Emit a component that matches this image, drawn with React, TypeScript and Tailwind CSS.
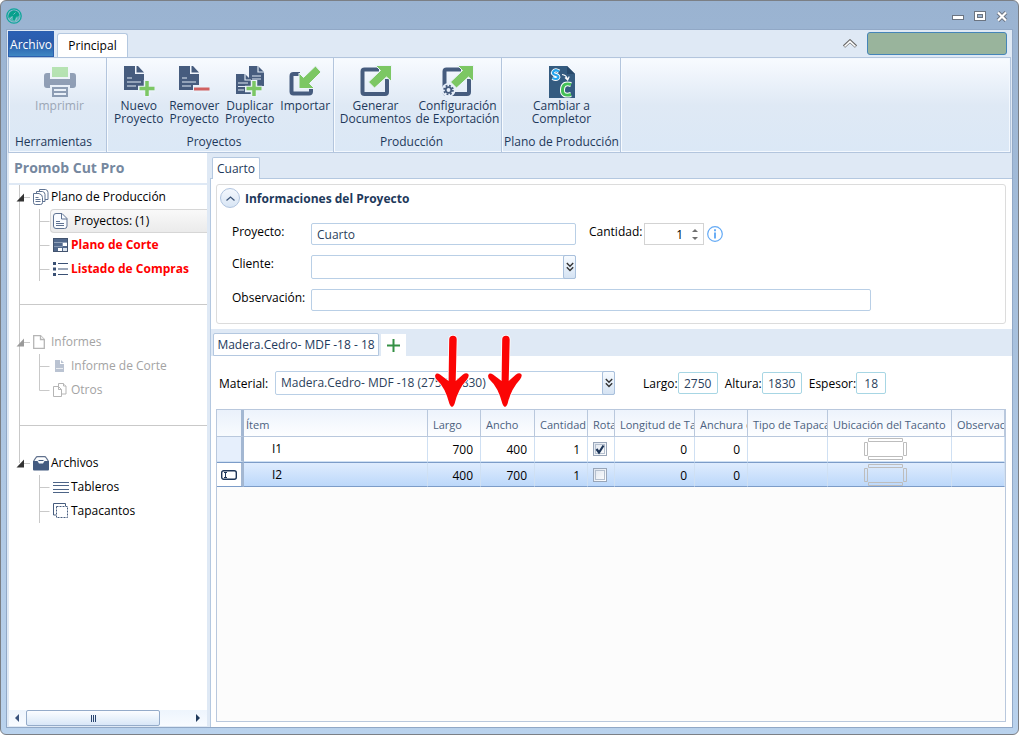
import React from 'react';

const NAVY = '#465c7e';
const GREEN = '#7cc764';

/* ---------- icons ---------- */

function LogoIcon() {
  return (
    <svg width="16" height="16" viewBox="0 0 16 16" aria-hidden="true">
      <circle cx="8" cy="8" r="7.2" fill="none" stroke="#0fa79b" strokeWidth="1.3" />
      <circle cx="8" cy="8" r="5.8" fill="#4fb5b2" />
      <path d="M2.500 10C2 7 3.500 4 6 3C9 1.800 12.500 3.600 13.300 6.500C13.200 8 12 8.800 10.500 8.600C9.500 9.500 9.600 11 8.400 12.500L7 11.500C7.500 9.500 6.800 8 5.500 8.300Z" fill="#07a08c" />
      <path d="M3.500 11.500L6.500 8.500M9.500 13L10.800 9.800M7.500 6.500L9.500 4.500" stroke="#9cc7d4" strokeWidth="0.8" />
    </svg>
  );
}

function PrinterIcon() {
  return (
    <svg width="32" height="32" viewBox="0 0 32 32" className="opacity-55" aria-hidden="true">
      <rect x="8" y="2" width="16" height="10" fill="#86d478" />
      <path d="M3 8h3v6h20V8h3q3 0 3 3v9q0 3-3 3h-3v-3H6v3H3q-3 0-3-3v-9q0-3 3-3Z" fill={NAVY} />
      <path d="M8 22h16v10H8Z" fill={NAVY} />
      <path d="M10 24h12v2H10ZM10 28h12v2H10Z" fill="#eef4fb" />
    </svg>
  );
}

function SheetShape() {
  return (
    <>
      <path d="M2 1h11v8h9v16H2Z" fill={NAVY} />
      <path d="M14.500 1h1.500l6 6.500h-7.500Z" fill={NAVY} />
      <path d="M5 13h5M5 17h14M5 21h9" stroke="#dfe9f4" strokeWidth="1.200" />
    </>
  );
}

function PlusShape() {
  return (
    <>
      <path d="M25 15v17M16 24h17" stroke="#e9f1fa" strokeWidth="6.500" />
      <path d="M25 16v15M17.500 23.500h15" stroke={GREEN} strokeWidth="3.500" />
    </>
  );
}

function NewIcon() {
  return (
    <svg width="34" height="32" viewBox="0 0 34 32" aria-hidden="true">
      <SheetShape />
      <PlusShape />
    </svg>
  );
}

function RemoveIcon() {
  return (
    <svg width="34" height="32" viewBox="0 0 34 32" aria-hidden="true">
      <SheetShape />
      <path d="M16 20h17v8H16Z" fill="#e9f1fa" />
      <path d="M17 22.500h15.500v3H17Z" fill="#d06060" />
    </svg>
  );
}

function DuplicateIcon() {
  return (
    <svg width="34" height="32" viewBox="0 0 34 32" aria-hidden="true">
      <path d="M16 1h9l6 6v14H16Z" fill={NAVY} />
      <path d="M25 1v6h6M19 11h9M19 14h9" stroke="#dfe9f4" strokeWidth="1.200" fill="none" />
      <path d="M3 9h9l6 6v14H3Z" fill={NAVY} />
      <path d="M12 9v6h6M5 18h10M5 21.500h10M5 25h6" stroke="#dfe9f4" strokeWidth="1.200" fill="none" />
      <g transform="translate(-4 0)">
        <PlusShape />
      </g>
    </svg>
  );
}

function ImportIcon() {
  return (
    <svg width="34" height="32" viewBox="0 0 34 32" aria-hidden="true">
      <path d="M12 9H5.500q-2 0-2 2v15.500q0 2 2 2H21q2 0 2-2V23" fill="none" stroke={NAVY} strokeWidth="4" />
      <path d="M11 8v15.500h15.500L21.500 18.500 33 7 27.500 1 15.500 12.500Z" fill={GREEN} stroke="#edf4fb" strokeWidth="1" />
    </svg>
  );
}

function ExportIcon({ gear = false }: { gear?: boolean }) {
  return (
    <svg width="34" height="32" viewBox="0 0 34 32" aria-hidden="true">
      <path d="M20 4.500H5.500q-2 0-2 2v20.500q0 2 2 2H26q2 0 2-2V14" fill="none" stroke={NAVY} strokeWidth="4" />
      <path d="M16.500 .5H32.500V16.500L27.500 12 15.500 23 9.500 17 21.500 5.500Z" fill={GREEN} stroke="#edf4fb" strokeWidth="1" />
      {gear && (
        <>
          <circle cx="7.500" cy="25" r="7" fill="#e7effa" />
          <circle cx="7.500" cy="25" r="4.400" fill="none" stroke={NAVY} strokeWidth="1.800" strokeDasharray="1.800 1.656" />
          <circle cx="7.500" cy="25" r="2.800" fill="none" stroke={NAVY} strokeWidth="1.800" />
        </>
      )}
    </svg>
  );
}

function SwitchIcon() {
  return (
    <svg width="28" height="34" viewBox="0 0 28 34" aria-hidden="true">
      <path d="M1 1h18l8 8v24H1Z" fill="#345b80" />
      <path d="M19 1v8h8Z" fill="#27496b" />
      <path d="M11 6.500Q7.500 4 5.500 6.500T8 10Q11.500 11 10 13T4.500 13" fill="none" stroke="#fff" strokeWidth="4" />
      <path d="M11 6.500Q7.500 4 5.500 6.500T8 10Q11.500 11 10 13T4.500 13" fill="none" stroke="#25a5ee" strokeWidth="2.200" />
      <path d="M14 9.500q4.500 .3 5.500 5M17 12.500l2.700 2.500 1.500-3.500" fill="none" stroke="#fff" strokeWidth="1.200" />
      <path d="M23 19.500Q15 17 14.500 24.500T23 29.500" fill="none" stroke="#fff" strokeWidth="5" />
      <path d="M23 19.500Q15 17 14.500 24.500T23 29.500" fill="none" stroke="#44bf57" strokeWidth="3" />
    </svg>
  );
}

function StackIcon() {
  return (
    <svg width="16" height="16" viewBox="0 0 16 16" fill="#fff" stroke="#5f7392" aria-hidden="true">
      <path d="M6.500 .5h6q2.500 .5 2.500 3v7h-8.500Z" />
      <path d="M3.500 2.500h6q2.500 .5 2.500 3v7h-8.500Z" />
      <path d="M.5 4.500h5.500q3.500 1 3.500 4v5q0 2-2 2h-5q-2 0-2-2Z" />
      <path d="M2.500 8.500h3M2.500 10.500h5M2.500 12.500h5" fill="none" />
    </svg>
  );
}

function PageIcon() {
  return (
    <svg width="15" height="16" viewBox="0 0 15 16" fill="none" stroke="#5f7392" aria-hidden="true">
      <path d="M3 .5h6l5 5V13q0 2.500-2.500 2.500h-8.500Q.5 15.500.5 13V3Q.5.5 3 .5Z" fill="#fafcff" />
      <path d="M8.500 .5v5.500h5.500M3 8.500h4M3 10.500h8M3 12.500h8" />
    </svg>
  );
}

function PlanIcon() {
  return (
    <svg width="15" height="15" viewBox="0 0 15 15" aria-hidden="true">
      <rect x=".5" y=".5" width="14" height="13" fill="#52698c" stroke="#42536e" />
      <path d="M1 4.500h13" stroke="#93a3ba" />
      <path d="M1 8.500h8.500v-4" fill="none" stroke="#8496b0" />
      <rect x="10" y="5" width="4" height="3" fill="#fff" />
      <rect x="5" y="10" width="4" height="3" fill="#fff" />
      <rect x="10" y="10" width="4" height="3" fill="#dce5ef" />
    </svg>
  );
}

function ListIcon() {
  return (
    <svg width="15" height="14" viewBox="0 0 15 14" aria-hidden="true">
      <path d="M0 0h3v3H0ZM0 5.500h3v3H0ZM0 11h3v3H0Z" fill="#3a5074" />
      <path d="M5 1.500h10M5 7h10M5 12.500h10" stroke="#3a5074" strokeWidth="1.200" />
    </svg>
  );
}

function BlankPageIcon() {
  return (
    <svg width="12" height="14" viewBox="0 0 12 14" fill="#fff" stroke="#b5b5b5" strokeWidth="1.300" aria-hidden="true">
      <path d="M.7 .7h6.800l3.800 3.800v8.800H.7Z" />
      <path d="M7.500 .7v3.800h3.800" />
    </svg>
  );
}

function ReportIcon() {
  return (
    <svg width="12" height="12" viewBox="0 0 12 12" aria-hidden="true">
      <path d="M2 0h5v4h4v8H2Z" fill="#bac3d2" />
      <path d="M8 0l3 3H8Z" fill="#bac3d2" />
      <path d="M3 8.500h7" stroke="#fff" strokeWidth=".7" />
    </svg>
  );
}

function CopiesIcon() {
  return (
    <svg width="14" height="14" viewBox="0 0 14 14" fill="#fff" stroke="#b5b5b5" aria-hidden="true">
      <path d="M5.500 .5h5l2.500 2.500v8h-7.500Z" />
      <path d="M.5 3.500h5l3 3v7h-8ZM5.500 3.500v3h3M10.500 .5v2.500h2.500" />
    </svg>
  );
}

function ArchiveIcon() {
  return (
    <svg width="16" height="15" viewBox="0 0 16 15" aria-hidden="true">
      <path d="M0 5h16v8.500q0 1-1 1H1q-1 0-1-1Z" fill="#425a80" />
      <path d="M.7 5L3 1.500Q3.500.7 4.500.7h7q1 0 1.500.8L15.300 5" fill="none" stroke="#60718d" strokeWidth="1.300" />
      <path d="M3 3.500h10l1 1.500H11.500l-1.500 2.500H6L4.500 5H2Z" fill="#f4f7fb" />
      <path d="M5.500 4.500h5" stroke="#425a80" />
    </svg>
  );
}

function BoardsIcon() {
  return (
    <svg width="16" height="11" viewBox="0 0 16 11" stroke="#4d6487" aria-hidden="true">
      <path d="M0 .5h16M0 3.500h16M0 7.500h16M0 10.500h16" />
    </svg>
  );
}

function EdgesIcon() {
  return (
    <svg width="16" height="16" viewBox="0 0 16 16" fill="none" stroke="#465c7e" aria-hidden="true">
      <path d="M12.500 3V.5H.5v11.500H3" />
      <rect x="3.500" y="3.500" width="11" height="11" strokeDasharray="2 1" />
    </svg>
  );
}

function DoubleChevron() {
  return (
    <svg width="8" height="10" viewBox="0 0 8 10" fill="none" stroke="#333" strokeWidth="1.400" aria-hidden="true">
      <path d="M.8 1L4 4.200 7.200 1M.8 5.200L4 8.400 7.200 5.200" />
    </svg>
  );
}

function RedArrow() {
  return (
    <svg width="36" height="74" viewBox="0 0 36 74" className="pointer-events-none absolute bottom-[27px] left-1.5 z-10" aria-hidden="true">
      <path
        d="M19 .8Q15.300 .8 15.200 4.500L14.600 46Q10 42.500 6 39.500Q2.500 37.500 1.300 40Q.5 42.500 3 45Q11 52 15.500 69Q18 75 20.500 69Q24 54 33 44.500Q35.500 41 34.300 39.300Q32.500 37 29 39.500L21.700 46L22.700 4.500Q22.700 .8 19 .8Z"
        fill="#fb0505"
        stroke="#fff"
        strokeWidth="1.600"
        paintOrder="stroke"
      />
    </svg>
  );
}

function EdgeDiagram() {
  return (
    <svg width="43" height="22" viewBox="0 0 43 22" fill="none" stroke="#bdbdbd" aria-hidden="true">
      <path d="M4.500 .5h34v3h-34ZM4.500 18.500h34v3h-34ZM.5 4.500h3v13h-3ZM39.500 4.500h3v13h-3Z" />
    </svg>
  );
}

/* ---------- ribbon ---------- */

function RibbonButton({ icon, lines, className = 'w-14', disabled = false }: { icon: React.ReactNode; lines: string[]; className?: string; disabled?: boolean }) {
  return (
    <button type="button" disabled={disabled} className={`flex flex-col items-center whitespace-nowrap leading-[13px] disabled:text-[#9ba6b5] ${className}`}>
      <span className="flex h-[34px] items-start">{icon}</span>
      {lines.map((l) => (
        <span key={l}>{l}</span>
      ))}
    </button>
  );
}

function RibbonGroup({ title, className = '', titleClass = 'pr-3', children }: { title: string; className?: string; titleClass?: string; children: React.ReactNode }) {
  return (
    <section className={`flex flex-col justify-between border-r border-[#b3c5dd] pt-[7px] pb-0.5 shadow-[1px_0_0_#f7fbff] ${className}`}>
      <div className="flex justify-center">{children}</div>
      <h2 className={`whitespace-nowrap text-center leading-4 ${titleClass}`}>{title}</h2>
    </section>
  );
}

/* ---------- tree ---------- */

type Leaf = { label: string; icon: React.ReactNode; tone?: 'alert' | 'selected' };

function TreeSection({ label, icon, leaves, muted = false, last = false, openEnd = true }: { label: string; icon: React.ReactNode; leaves: Leaf[]; muted?: boolean; last?: boolean; openEnd?: boolean }) {
  return (
    <li className={`ml-2.5 border-l ${last ? 'border-transparent' : 'border-[#c9c9c9]'} ${muted ? 'text-[#a3a3a3]' : 'text-black'}`}>
      <div className="flex h-6 items-center">
        <svg width="15" height="24" viewBox="0 0 15 24" className="-ml-1 shrink-0" aria-hidden="true">
          {last && <path d="M3.500 0v12" stroke="#c9c9c9" />}
          <path d="M8 12.500h6" stroke="#c9c9c9" />
          <path d="M8 8.500v8H.5Z" fill={muted ? '#9a9a9a' : '#333'} />
        </svg>
        <span className="flex w-[18px] items-center justify-start pl-0.5">{icon}</span>
        <span className="whitespace-nowrap pl-0.5">{label}</span>
      </div>
      <ul>
        {leaves.map((leaf, i) => (
          <li key={leaf.label} className="ml-[19px] flex h-6 items-center">
            <svg width="11" height="24" viewBox="0 0 11 24" className="shrink-0" aria-hidden="true">
              <path d={i === leaves.length - 1 && !openEnd ? 'M.5 0v12.500h10' : 'M.5 0v24M0 12.500h10.500'} fill="none" stroke="#c9c9c9" />
            </svg>
            <button
              type="button"
              className={`flex h-6 grow items-center whitespace-nowrap border pl-0.5 ${
                leaf.tone === 'selected' ? 'rounded-l border-r-0 border-[#d6d6d6] bg-linear-to-b from-[#f9f9f9] to-[#ebebeb]' : 'border-transparent'
              } ${leaf.tone === 'alert' ? 'font-bold text-[#ff0000]' : ''}`}
            >
              <span className="flex w-[18px] items-center justify-start">{leaf.icon}</span>
              <span className={leaf.tone === 'selected' ? 'pl-[3px]' : ''}>{leaf.label}</span>
            </button>
          </li>
        ))}
      </ul>
    </li>
  );
}

function TreeGap() {
  return (
    <li aria-hidden="true" className="ml-2.5 h-[49px] border-l border-[#c9c9c9] pt-[23px]">
      <div className="border-t border-[#c9c9c9]" />
    </li>
  );
}

/* ---------- form controls ---------- */

const field = 'rounded-[2px] border border-[#b9cfe6] bg-white text-[#2b3f5c] outline-none';

function Combo({ id, value, className }: { id: string; value: string; className: string }) {
  return (
    <div className={`relative ${className}`}>
      <select id={id} defaultValue={value} className={`h-6 w-full appearance-none pl-[5px] ${field}`}>
        <option value={value}>{value}</option>
      </select>
      <span className="pointer-events-none absolute inset-y-0 right-0 flex w-[13px] items-center justify-center rounded-[2px] border border-[#a9c0dc] bg-linear-to-b from-[#f7fbff] to-[#d5e3f3]">
        <DoubleChevron />
      </span>
    </div>
  );
}

function Dimension({ id, label, value, className }: { id: string; label: string; value: string; className: string }) {
  return (
    <div className="flex items-center">
      <label htmlFor={id} className="pt-0.5 text-black">
        {label}
      </label>
      <input id={id} readOnly defaultValue={value} className={`h-[22px] rounded-[2px] border border-[#a7d6e4] bg-white text-center text-[#2b3f5c] outline-none ${className}`} />
    </div>
  );
}

/* ---------- grid ---------- */

const columns = [
  { title: 'Ítem', width: '' },
  { title: 'Largo', width: 'w-[53px]', arrow: true },
  { title: 'Ancho', width: 'w-[54px]', arrow: true },
  { title: 'Cantidad', width: 'w-[53px]' },
  { title: 'Rota', width: 'w-[27px]' },
  { title: 'Longitud de Tapacanto', width: 'w-[80px]' },
  { title: 'Anchura de Tapacanto', width: 'w-[53px]' },
  { title: 'Tipo de Tapacanto', width: 'w-[80px]' },
  { title: 'Ubicación del Tacanto', width: 'w-[124px]' },
  { title: 'Observación', width: 'w-[53px]' },
];

const rows = [
  { item: 'I1', largo: 700, ancho: 400, cantidad: 1, rota: true, active: false },
  { item: 'I2', largo: 400, ancho: 700, cantidad: 1, rota: false, active: true },
];

function RotateBox({ checked, label }: { checked: boolean; label: string }) {
  return (
    <label className="relative ml-[5px] block size-[14px]">
      <input
        type="checkbox"
        aria-label={label}
        defaultChecked={checked}
        className="peer block size-[14px] appearance-none border border-[#98a5b8] bg-linear-to-br from-[#dfe5ee] to-white outline-1 -outline-offset-3 outline-[#b4bfce]"
      />
      <svg width="14" height="14" viewBox="0 0 14 14" className="pointer-events-none absolute inset-0 hidden peer-checked:block" aria-hidden="true">
        <path d="M3.500 7L6 10.500 10.500 3.500" fill="none" stroke="#1d3557" strokeWidth="2.200" />
      </svg>
    </label>
  );
}

function PiecesTable() {
  const cell = 'border-r border-b border-[#cfe0f3] p-0';
  const num = `${cell} pt-0.5 pr-[7px] text-right`;
  return (
    <table className="w-full table-fixed border-separate border-spacing-0 text-black">
      <colgroup>
        <col className="w-[27px]" />
        {columns.map((c) => (
          <col key={c.title} className={c.width} />
        ))}
      </colgroup>
      <thead>
        <tr className="h-[27px]">
          <th className="border-r-3 border-b border-r-[#a3b7d2] border-b-[#b9c8dd] bg-linear-to-b from-[#eaf1fb] to-[#f8fbfe] p-0" aria-label="Estado" />
          {columns.map((c) => (
            <th key={c.title} className="relative border-r border-b border-[#b9c8dd] bg-linear-to-b from-[#edf3fc] to-[#fdfeff] p-0 text-left text-[11px] font-normal text-[#4b6180]">
              <span className={`block overflow-hidden pt-[3px] whitespace-nowrap ${c.title === 'Ítem' ? 'pl-0.5' : 'pl-[5px]'}`}>{c.title}</span>
              {c.arrow && <RedArrow />}
            </th>
          ))}
        </tr>
      </thead>
      <tbody>
        {rows.map((r) => (
          <tr key={r.item} className={`h-[25px] ${r.active ? 'bg-linear-to-b from-[#e0edfe] to-[#bbd7fa] *:border-y *:border-y-[#7c9cc8]' : 'bg-white'}`}>
            <th className={`border-r-3 border-b border-[#cfe0f3] border-r-[#a3b7d2] p-0 ${r.active ? 'bg-white' : 'bg-[#e6effc]'}`}>
              {r.active && (
                <svg width="16" height="10" viewBox="0 0 16 10" fill="none" stroke="#1e3557" className="mx-auto" aria-label="Editando">
                  <rect x=".7" y=".7" width="14.600" height="8.600" rx="2" strokeWidth="1.400" />
                  <path d="M3 2.500h3M3 7.500h3M4.500 2.500v5" />
                </svg>
              )}
            </th>
            <td className={`${cell} pl-7`}>{r.item}</td>
            <td className={num}>{r.largo}</td>
            <td className={num}>{r.ancho}</td>
            <td className={num}>{r.cantidad}</td>
            <td className={cell}>
              <RotateBox checked={r.rota} label={`Rota ${r.item}`} />
            </td>
            <td className={num}>0</td>
            <td className={num}>0</td>
            <td className={cell} />
            <td className={`${cell} pl-9`}>
              <EdgeDiagram />
            </td>
            <td className={cell} />
          </tr>
        ))}
      </tbody>
    </table>
  );
}

/* ---------- page ---------- */

export default function App() {
  return (
    <div className="flex min-h-screen flex-col rounded-md border border-[#7b7f85] bg-linear-to-b from-[#9ab3d1] to-[#b9d2ed] px-[5px] pb-[6px] font-['Open_Sans','Noto_Sans',sans-serif] text-[12px] leading-4 text-[#1e395b]">
      <header className="flex h-7 items-center justify-between pt-0.5 pr-[5px]">
        <LogoIcon />
        <div className="flex items-center gap-2.5">
          <button type="button" aria-label="Minimizar">
            <svg width="12" height="12" viewBox="0 0 12 12">
              <rect x=".5" y="5.500" width="11" height="4" fill="#fff" stroke="#6b7481" />
            </svg>
          </button>
          <button type="button" aria-label="Maximizar">
            <svg width="12" height="10" viewBox="0 0 12 10" stroke="#6b7481">
              <rect x=".5" y=".5" width="11" height="9" fill="#fff" />
              <rect x="3.500" y="3.500" width="5" height="3" fill="#9ab3d1" />
            </svg>
          </button>
          <button type="button" aria-label="Cerrar">
            <svg width="12" height="11" viewBox="0 0 12 11">
              <path d="M2 1.500l8 8M10 1.500l-8 8" stroke="#6b7481" strokeWidth="4" />
              <path d="M2 1.500l8 8M10 1.500l-8 8" stroke="#fff" strokeWidth="2.200" />
            </svg>
          </button>
        </div>
      </header>

      <div className="flex grow flex-col border border-[#91a8c6] bg-[#dfe9f5]">
        <nav className="flex h-[27px] items-end gap-[3px] pr-[5px] pl-px">
          <button type="button" className="h-[26px] w-[46px] border border-[#2c5fae] bg-linear-to-b from-[#2b60b4] via-[#2a5caa] to-[#3f87c3] pt-0.5 text-center text-white">
            Archivo
          </button>
          <button type="button" className="h-6 w-[71px] rounded-t-[3px] border border-b-0 border-[#b4c8e0] bg-white text-black">
            Principal
          </button>
          <div className="ml-auto flex items-center gap-2.5 pb-0.5">
            <button type="button" aria-label="Contraer cinta">
              <svg width="14" height="9" viewBox="0 0 14 9" fill="none">
                <path d="M1 7.500L7 2l6 5.500" stroke="#666" strokeWidth="3.200" />
                <path d="M1.500 7.500L7 2.300l5.500 5.200" stroke="#fff" strokeWidth="1.600" />
              </svg>
            </button>
            <div className="h-[23px] w-[140px] rounded-[3px] border border-[#4585b8] bg-[#99b49c]" />
          </div>
        </nav>

        <div className="mr-px ml-px flex h-24 border border-[#b3c5dd] bg-linear-to-b from-[#f8fbff] via-[#dfe9f5] to-[#dbe8f6] shadow-[inset_0_0_0_1px_#f3f8fe]">
          <RibbonGroup title="Herramientas" className="w-[98px] pl-1">
            <RibbonButton icon={<PrinterIcon />} lines={['Imprimir']} disabled />
          </RibbonGroup>
          <RibbonGroup title="Proyectos" className="w-[227px] pl-1" titleClass="pr-4">
            <RibbonButton icon={<NewIcon />} lines={['Nuevo', 'Proyecto']} />
            <RibbonButton icon={<RemoveIcon />} lines={['Remover', 'Proyecto']} />
            <RibbonButton icon={<DuplicateIcon />} lines={['Duplicar', 'Proyecto']} />
            <RibbonButton icon={<ImportIcon />} lines={['Importar']} />
          </RibbonGroup>
          <RibbonGroup title="Producción" className="w-[168px]">
            <RibbonButton className="w-[80px]" icon={<ExportIcon />} lines={['Generar', 'Documentos']} />
            <RibbonButton className="w-[84px]" icon={<ExportIcon gear />} lines={['Configuración', 'de Exportación']} />
          </RibbonGroup>
          <RibbonGroup title="Plano de Producción" className="w-[119px] pl-px" titleClass="">
            <RibbonButton className="w-24" icon={<SwitchIcon />} lines={['Cambiar a', 'Completor']} />
          </RibbonGroup>
        </div>

        <div className="flex grow gap-[3px] pl-0.5">
          <aside className="mb-px flex w-[198px] shrink-0 flex-col bg-white">
            <h1 className="border-b-2 border-[#dfe9f5] pt-[7px] pb-[7px] pl-[5px] text-[14px] leading-4 font-bold text-[#76889f]">Promob Cut Pro</h1>
            <ul className="grow">
              <TreeSection
                label="Plano de Producción"
                icon={<StackIcon />}
                leaves={[
                  { label: 'Proyectos: (1)', icon: <PageIcon />, tone: 'selected' },
                  { label: 'Plano de Corte', icon: <PlanIcon />, tone: 'alert' },
                  { label: 'Listado de Compras', icon: <ListIcon />, tone: 'alert' },
                ]}
              />
              <TreeGap />
              <TreeSection
                label="Informes"
                icon={<BlankPageIcon />}
                muted
                openEnd={false}
                leaves={[
                  { label: 'Informe de Corte', icon: <ReportIcon /> },
                  { label: 'Otros', icon: <CopiesIcon /> },
                ]}
              />
              <TreeGap />
              <TreeSection
                label="Archivos"
                icon={<ArchiveIcon />}
                last
                leaves={[
                  { label: 'Tableros', icon: <BoardsIcon /> },
                  { label: 'Tapacantos', icon: <EdgesIcon /> },
                ]}
              />
            </ul>
            <div className="flex h-4 items-center bg-linear-to-b from-[#eef5fd] to-[#f8fbff] px-1.5">
              <button type="button" aria-label="Desplazar a la izquierda">
                <svg width="4" height="8" viewBox="0 0 4 8"><path d="M4 0v8L0 4Z" fill="#38527c" /></svg>
              </button>
              <div className="ml-[7px] flex h-4 w-[134px] items-center justify-center gap-px rounded-[2px] border border-[#94abc9] bg-linear-to-b from-[#fbfdff] to-[#d9e7f7]">
                <span className="h-[7px] w-px bg-[#2a4570]" />
                <span className="h-[7px] w-px bg-[#2a4570]" />
                <span className="h-[7px] w-px bg-[#2a4570]" />
              </div>
              <button type="button" aria-label="Desplazar a la derecha" className="mr-px ml-auto">
                <svg width="4" height="8" viewBox="0 0 4 8"><path d="M0 0v8l4-4Z" fill="#1e395b" /></svg>
              </button>
            </div>
          </aside>

          <main className="flex min-w-0 grow flex-col pt-1">
            <div className="flex pl-0.5">
              <button type="button" className="z-10 -mb-px h-[22px] w-12 rounded-t-[2px] border border-b-0 border-[#b4c8e0] bg-white">
                Cuarto
              </button>
            </div>
            <div className="flex grow flex-col border-t border-l border-[#b4c8e0] bg-white">
              <section className="mr-1.5 ml-[5px] mt-[5px] h-[140px] rounded-[3px] border border-[#dcdcdc] pl-[3px]">
                <div className="flex items-center gap-[5px] pt-[3px]">
                  <button type="button" aria-label="Contraer" className="flex size-5 items-center justify-center rounded-full border border-[#b0c4df] bg-linear-to-b from-[#f4f8fd] to-[#d8e5f4]">
                    <svg width="9" height="5" viewBox="0 0 9 5" fill="none" stroke="#3d5579" strokeWidth="1.300"><path d="M.5 4.500l4-3.500 4 3.500" /></svg>
                  </button>
                  <h2 className="pt-0.5 font-bold">Informaciones del Proyecto</h2>
                </div>
                <div className="grid grid-cols-[79px_1fr] gap-y-2.5 pt-[15px] pl-3 text-black">
                  <label htmlFor="proyecto" className="pt-px">Proyecto:</label>
                  <div className="flex">
                    <input id="proyecto" defaultValue="Cuarto" className={`h-[22px] w-[265px] px-[5px] ${field}`} />
                    <label htmlFor="cantidad" className="ml-[13px] w-[55px] shrink-0 pt-px whitespace-nowrap">
                      Cantidad:
                    </label>
                    <div className="flex h-[22px] w-[60px] border border-[#d3d3d3] bg-white">
                      <input id="cantidad" inputMode="numeric" defaultValue="1" className="w-0 grow pt-0.5 pr-1 text-right outline-none" />
                      <div className="flex w-4 flex-col items-center justify-center gap-[5px]">
                        <button type="button" aria-label="Aumentar" className="block">
                          <svg width="6" height="3" viewBox="0 0 6 3" className="block"><path d="M3 0l3 3H0Z" fill="#707070" /></svg>
                        </button>
                        <button type="button" aria-label="Disminuir" className="block">
                          <svg width="6" height="3" viewBox="0 0 6 3" className="block"><path d="M0 0h6L3 3Z" fill="#707070" /></svg>
                        </button>
                      </div>
                    </div>
                    <svg width="16" height="16" viewBox="0 0 16 16" fill="none" stroke="#64aaf5" className="mt-[3px] ml-[3px]" aria-label="Información">
                      <circle cx="8" cy="8" r="7.300" strokeWidth="1.200" />
                      <path d="M8 3.200v2M8 6.500v6" strokeWidth="1.900" />
                    </svg>
                  </div>
                  <label htmlFor="cliente" className="pt-px">Cliente:</label>
                  <Combo id="cliente" value="" className="w-[265px]" />
                  <label htmlFor="observacion" className="pt-px">Observación:</label>
                  <input id="observacion" className={`h-[22px] w-[560px] px-[5px] ${field}`} />
                </div>
              </section>

              <div className="mt-[5px] flex h-[27px] items-end gap-0.5 bg-[#dfe9f5] pl-0.5">
                <button type="button" className="h-[23px] w-[166px] whitespace-nowrap rounded-t-[2px] border border-[#b4c8e0] bg-white">
                  Madera.Cedro- MDF -18 - 18
                </button>
                <button type="button" aria-label="Agregar material" className="flex h-[22px] w-[25px] items-center justify-center bg-white">
                  <svg width="13" height="13" viewBox="0 0 13 13"><path d="M6.500 0v13M0 6.500h13" stroke="#349044" strokeWidth="2" /></svg>
                </button>
              </div>

              <div className="flex items-center px-2 pt-[15px] pb-3.5">
                <label htmlFor="material" className="w-14 pt-0.5 text-black">
                  Material:
                </label>
                <Combo id="material" value="Madera.Cedro- MDF -18 (2750x1830)" className="w-[340px]" />
                <div className="ml-7 flex gap-[7px]">
                  <Dimension id="dim-largo" label="Largo:" value="2750" className="w-10" />
                  <Dimension id="dim-altura" label="Altura:" value="1830" className="w-10" />
                  <Dimension id="dim-espesor" label="Espesor:" value="18" className="w-[30px]" />
                </div>
              </div>

              <div className="mr-[6px] mb-[5px] ml-[5px] grow border border-[#b9c8dd] bg-[#fcfcfc]">
                <PiecesTable />
              </div>
            </div>
          </main>
        </div>
      </div>
    </div>
  );
}
